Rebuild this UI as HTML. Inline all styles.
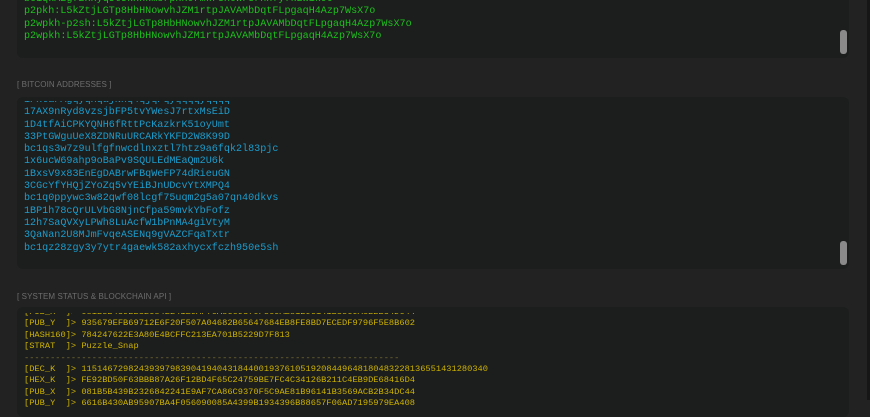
<!DOCTYPE html>
<html><head><meta charset="utf-8"><style>
html,body{margin:0;padding:0;width:870px;height:400px;overflow:hidden;background:#222222;}
.edge{position:absolute;right:0;top:0;width:3px;height:400px;background:#161616;}
.panel{position:absolute;left:17px;width:832px;background:#1c1d1d;border-radius:6px;overflow:hidden;}
.clip{position:absolute;left:0;right:0;overflow:hidden;}
.txt{position:absolute;left:7px;font-family:"Liberation Mono",monospace;white-space:pre;}
.g{color:#1cc11c;font-size:10.1px;line-height:12.3px;}
.c{color:#1b9dcc;font-size:10.1px;line-height:12.3px;}
.y{color:#cdb300;font-size:8.7px;line-height:11.4px;}
.d{color:#7d7434;}
.sb{position:absolute;left:823px;width:7px;height:24px;background:#8a8a8a;border-radius:3px;}
.lbl{position:absolute;left:17px;font-family:"Liberation Sans",sans-serif;font-size:8px;color:#6d6d6d;letter-spacing:0.1px;}
</style></head><body>
<div class="edge"></div>

<div class="panel" style="top:-20px;height:78px;">
  <div class="clip" style="top:20px;height:58px;">
    <div class="txt g" style="top:-6px;">bc1qkAzgfzxxyq5t5kxnkmsrpxx0rmkr3x0wr3rnx7y7kzw1k90
p2pkh:L5kZtjLGTp8HbHNowvhJZM1rtpJAVAMbDqtFLpgaqH4Azp7WsX7o
p2wpkh-p2sh:L5kZtjLGTp8HbHNowvhJZM1rtpJAVAMbDqtFLpgaqH4Azp7WsX7o
p2wpkh:L5kZtjLGTp8HbHNowvhJZM1rtpJAVAMbDqtFLpgaqH4Azp7WsX7o</div>
  </div>
  <div class="sb" style="top:50px;"></div>
</div>

<div class="lbl" style="top:80px;">[ BITCOIN ADDRESSES ]</div>

<div class="panel" style="top:97px;height:172px;">
  <div class="clip" style="top:4px;height:168px;">
    <div class="txt c" style="top:-6px;">1PxtaFAgqyqHqajNhq4qjqPqyqqqqyqqqq
17AX9nRyd8vzsjbFP5tvYWesJ7rtxMsEiD
1D4tfAiCPKYQNH6fRttPcKazkrK51oyUmt
33PtGWguUeX8ZDNRuURCARkYKFD2W8K99D
bc1qs3w7z9ulfgfnwcdlnxztl7htz9a6fqk2l83pjc
1x6ucW69ahp9oBaPv9SQULEdMEaQm2U6k
1BxsV9x83EnEgDABrwFBqWeFP74dRieuGN
3CGcYfYHQjZYoZq5vYEiBJnUDcvYtXMPQ4
bc1q0ppywc3w82qwf08lcgf75uqm2g5a07qn40dkvs
1BP1h78cQrULVbG8NjnCfpa59mvkYbFofz
12h7SaQVXyLPWh8LuAcfW1bPnMA4giVtyM
3QaNan2U8MJmFvqeASENq9gVAZCFqaTxtr
bc1qz28zgy3y7ytr4gaewk582axhycxfczh950e5sh</div>
  </div>
  <div class="sb" style="top:144px;"></div>
</div>

<div class="lbl" style="top:292px;">[ SYSTEM STATUS &amp; BLOCKCHAIN API ]</div>

<div class="panel" style="top:307px;height:110px;">
  <div class="clip" style="top:6px;height:110px;">
    <div class="txt y" style="top:-6px;">[PUB_X  ]&gt; 081B5B439B2326842241E9AF7CA86C9370F5C9AE81B96141B3569ACB2B34DC44
[PUB_Y  ]&gt; 935679EFB69712E6F20F507A04682B65647684EB8FE8BD7ECEDF9796F5E8B602
[HASH160]&gt; 784247622E3A80E4BCFFC213EA701B5229D7F813
[STRAT  ]&gt; Puzzle_Snap
<span class="d">------------------------------------------------------------------------</span>
[DEC_K  ]&gt; 115146729824393979839041940431844001937610519208449648180483228136551431280340
[HEX_K  ]&gt; FE92BD50F63BBB87A26F12BD4F65C24759BE7FC4C34126B211C4EB9DE68416D4
[PUB_X  ]&gt; 081B5B439B2326842241E9AF7CA86C9370F5C9AE81B96141B3569ACB2B34DC44
[PUB_Y  ]&gt; 6616B430AB95907BA4F056090085A4399B1934396B88657F06AD7195979EA408</div>
  </div>
</div>
</body></html>
